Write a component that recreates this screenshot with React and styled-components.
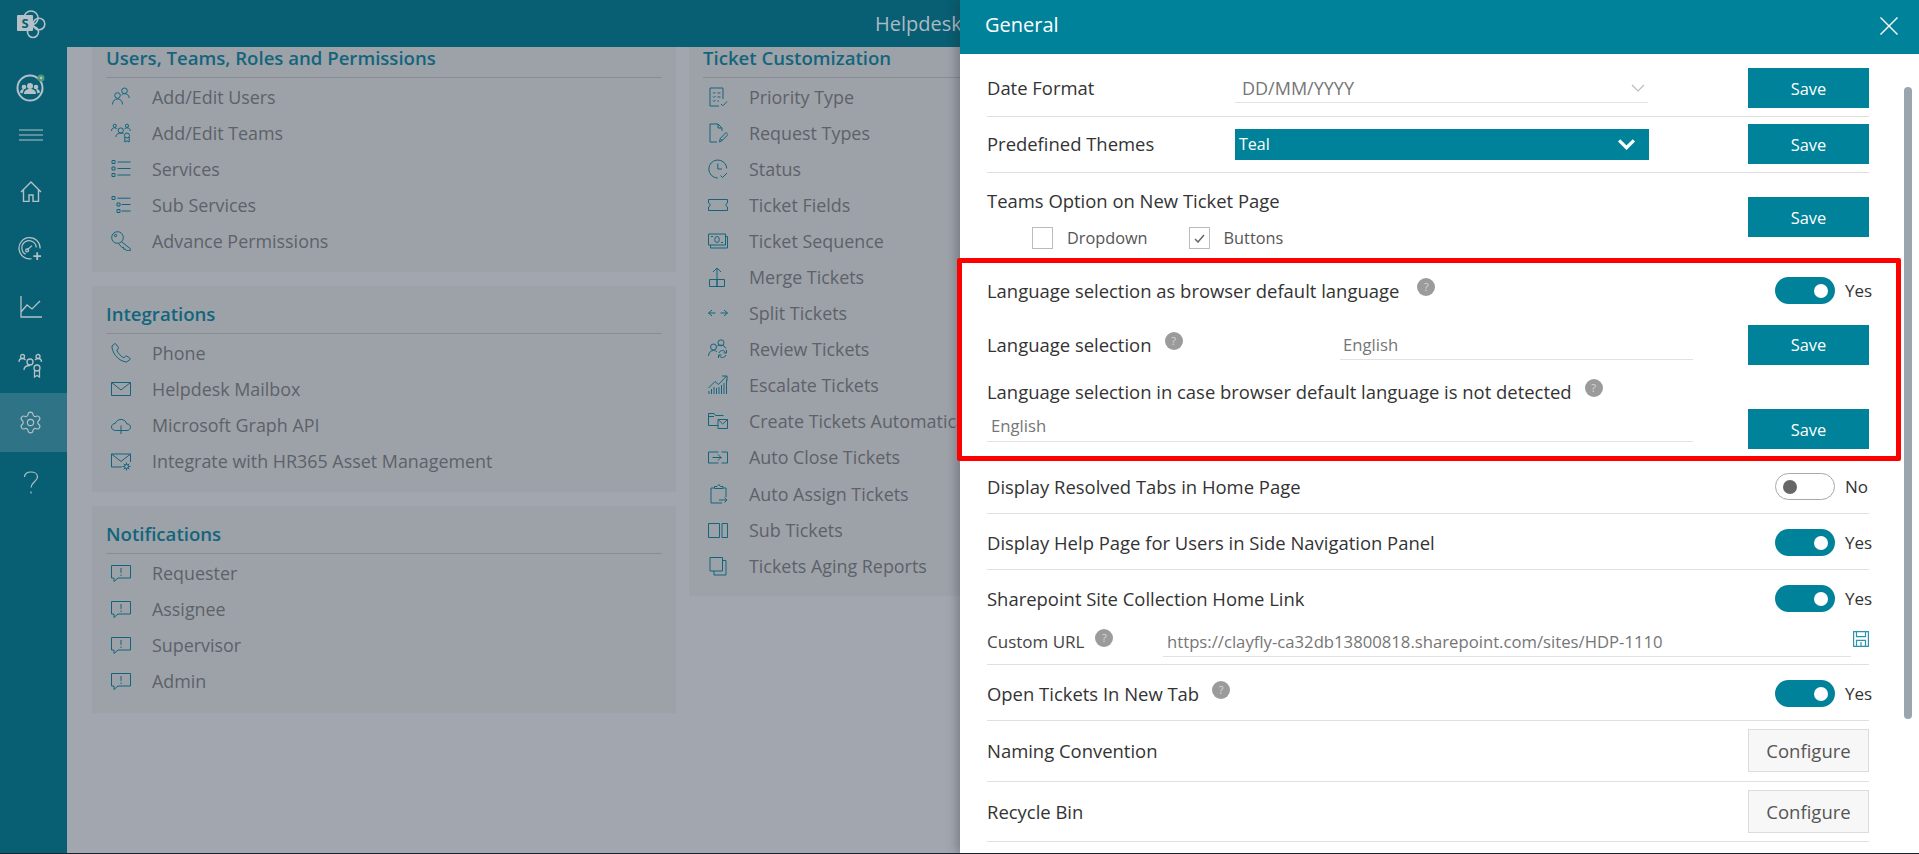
import React from 'react';
import styled, { createGlobalStyle } from 'styled-components';
import { Settings } from 'lucide-react';

const GlobalStyle = createGlobalStyle`
  html, body { margin: 0; padding: 0; }
  body {
    font-family: "Open Sans", "Noto Sans", sans-serif;
    background: #a2a7af;
  }
`;

const Page = styled.div`
  display: flex;
  position: relative;
  height: 853px;
  border-bottom: 1px solid #18222c;
  overflow: hidden;
  background: #a2a7af;
`;

/* side navigation */
const SideNav = styled.nav`
  width: 67px;
  flex: none;
  display: flex;
  flex-direction: column;
  background: #085e72;
  color: #b4c2c8;
`;

const NavItem = styled.div`
  height: ${(p) => p.$height}px;
  margin-top: ${(p) => p.$top || 0}px;
  box-sizing: border-box;
  padding-right: 6px;
  flex: none;
  display: flex;
  align-items: center;
  justify-content: center;
  background: ${(p) => (p.$active ? '#2f7486' : 'transparent')};
`;

/* dimmed page behind the panel */
const Main = styled.div`
  flex: 1;
  min-width: 0;
  display: flex;
  flex-direction: column;
`;

const TopBar = styled.header`
  height: 47px;
  flex: none;
  display: flex;
  align-items: center;
  padding-left: 808px;
  background: #085e72;
  color: #a9bbc3;
  font-size: 20px;
  position: relative;
  z-index: 1;
`;

const Columns = styled.div`
  display: flex;
  gap: 13px;
  padding-left: 25px;
  margin-top: -17px;
`;

const Column = styled.div`
  width: 584px;
  flex: none;
  display: flex;
  flex-direction: column;
  gap: 14px;
`;

const Card = styled.section`
  height: ${(p) => p.$height}px;
  padding: 16px 14px 0 14px;
  box-sizing: border-box;
  background: #9da2a9;
`;

const CardTitle = styled.h3`
  margin: 0;
  height: 31px;
  line-height: 24px;
  font-size: 18.6px;
  font-weight: 600;
  color: #13657c;
  border-bottom: 1px solid #878c95;
  white-space: nowrap;
`;

const LinkList = styled.ul`
  margin: 0;
  padding: 1px 0 0;
  list-style: none;
`;

const LinkRow = styled.li`
  height: 36.05px;
  display: flex;
  align-items: center;
  padding-left: 5px;
  gap: 21px;
  font-size: 17.9px;
  color: #5d6168;
  white-space: nowrap;
`;

const LinkIcon = styled.svg`
  width: 20px;
  height: 20px;
  flex: none;
  fill: none;
  stroke: #13657c;
  stroke-width: 1;
`;

/* settings panel */
const Panel = styled.aside`
  position: absolute;
  top: 0;
  right: 0;
  bottom: 0;
  width: 959px;
  background: #fff;
  box-shadow: -3px 0 10px rgba(40, 44, 52, 0.35);
  z-index: 2;
`;

const PanelHeader = styled.div`
  height: 54px;
  box-sizing: border-box;
  display: flex;
  align-items: center;
  justify-content: space-between;
  padding: 0 21px 6px 25px;
  background: #00839a;
  color: #fff;
  font-size: 20px;
`;

const CloseIcon = styled.svg`
  width: 18px;
  height: 18px;
  margin-top: 4px;
  stroke: #fff;
  stroke-width: 1.4;
  fill: none;
`;

const ScrollThumb = styled.div`
  position: absolute;
  left: 944px;
  top: 87px;
  width: 8px;
  height: 632px;
  border-radius: 4px;
  background: #9aa5ad;
`;

const Row = styled.div`
  height: ${(p) => p.$height}px;
  box-sizing: border-box;
  margin: 0 50px 0 27px;
  padding: ${(p) => p.$top}px 0 ${(p) => p.$bottom}px;
  display: flex;
  align-items: ${(p) => p.$align || 'center'};
  border-bottom: ${(p) => (p.$plain ? '0' : '1px solid #e0e0e0')};
`;

const Label = styled.div`
  width: ${(p) => (p.$width ? `${p.$width}px` : 'auto')};
  flex: none;
  display: flex;
  align-items: center;
  gap: ${(p) => p.$gap || 13}px;
  font-size: 18.45px;
  font-weight: 500;
  color: #333;
  line-height: 24px;
  white-space: nowrap;
`;

const SubLabel = styled(Label)`
  font-weight: 400;
  font-size: 17px;
  color: #444;
`;

const HelpDot = styled.span`
  width: 18px;
  height: 18px;
  flex: none;
  transform: translateY(-4px);
  border-radius: 50%;
  background: #9b9b9b;
  color: #d8d8d8;
  font-size: 11px;
  font-weight: 400;
  line-height: 18px;
  text-align: center;
`;

const Field = styled.div`
  width: ${(p) => (p.$width ? `${p.$width}px` : 'auto')};
  height: ${(p) => p.$height || 30}px;
  box-sizing: border-box;
  flex: ${(p) => (p.$width ? 'none' : 1)};
  display: flex;
  align-items: center;
  justify-content: space-between;
  padding: 0 3px 0 ${(p) => p.$indent || 3}px;
  border-bottom: 1px solid #e2e2e2;
  color: #767676;
  font-size: ${(p) => p.$size || 16.7}px;
  white-space: nowrap;
`;

const ThemeSelect = styled.div`
  width: 414px;
  height: 31px;
  box-sizing: border-box;
  display: flex;
  align-items: center;
  justify-content: space-between;
  padding: 0 13px 0 4px;
  background: #00839a;
  color: #fff;
  font-size: 16px;
`;

const Chevron = styled.svg`
  width: ${(p) => p.$size}px;
  height: ${(p) => p.$size}px;
  fill: none;
  stroke: ${(p) => p.$color};
  stroke-width: ${(p) => p.$weight};
`;

const SaveButton = styled.button`
  width: 121px;
  height: 40px;
  flex: none;
  margin: ${(p) => p.$top || 0}px 0 0 auto;
  padding: 0;
  border: 0;
  background: #00839a;
  color: #fff;
  font: inherit;
  font-size: 16.4px;
`;

const ConfigureButton = styled.button`
  width: 121px;
  height: 43px;
  flex: none;
  margin-left: auto;
  padding: 0;
  box-sizing: border-box;
  border: 1px solid #dcdcdc;
  background: #f7f7f7;
  color: #555;
  font: inherit;
  font-size: 18.5px;
`;

const ToggleWrap = styled.div`
  width: 94px;
  flex: none;
  margin-left: auto;
  display: flex;
  align-items: center;
  gap: 10px;
  font-size: 17px;
  color: #333;
`;

const Track = styled.span`
  width: 60px;
  height: 27px;
  flex: none;
  box-sizing: border-box;
  display: flex;
  align-items: center;
  justify-content: ${(p) => (p.$on ? 'flex-end' : 'flex-start')};
  padding: 0 7px;
  border-radius: 14px;
  background: ${(p) => (p.$on ? '#00839a' : '#fff')};
  border: ${(p) => (p.$on ? '0' : '1px solid #a8a8a8')};
`;

const Knob = styled.span`
  width: 14px;
  height: 14px;
  border-radius: 50%;
  background: ${(p) => (p.$on ? '#fff' : '#666')};
`;

const ThemeBlock = styled.div`
  display: flex;
  flex-direction: column;
  flex: 1;
`;

const CheckRow = styled.div`
  display: flex;
  align-items: center;
  gap: 14px;
  margin: 14px 0 0 45px;
  font-size: 16.3px;
  color: #555;
`;

const Box = styled.span`
  width: 21px;
  height: 22px;
  box-sizing: border-box;
  display: flex;
  align-items: center;
  justify-content: center;
  border: 1px solid #bcbcbc;
  margin-left: ${(p) => p.$gap || 0}px;
`;

const Highlighted = styled.div`
  position: relative;
  height: 203px;
`;

const RedFrame = styled.div`
  position: absolute;
  left: -3px;
  right: 18px;
  top: 0;
  bottom: 0;
  border: 5px solid #f00;
  border-radius: 2px;
`;

const LoneLabel = styled(Label)`
  margin: 15px 50px 0 27px;
`;

const SaveIcon = styled.svg`
  width: 16px;
  height: 16px;
  flex: none;
  margin: 0 0 6px 2px;
  fill: none;
  stroke: #2a94ad;
  stroke-width: 1.2;
`;

const LinkBlock = styled.div`
  margin: 0 50px 0 27px;
  height: 95px;
  box-sizing: border-box;
  padding-top: 15px;
  display: flex;
  flex-direction: column;
  border-bottom: 1px solid #e0e0e0;
`;

const LineRow = styled.div`
  display: flex;
  align-items: center;
  height: ${(p) => p.$height}px;
  margin-top: ${(p) => p.$gap || 0}px;
`;

const linkIcons = {
  users: (
    <>
      <circle cx="13.5" cy="3.8" r="2.8" />
      <circle cx="6.5" cy="8.5" r="2.8" />
      <path d="M1.5 17.5c0-3.4 2-5.5 5-5.5s5 2.1 5 5.5M10.5 8c.8-1 2-1.4 3-1.4 2.6 0 4.5 1.6 4.7 4.4" />
    </>
  ),
  teams: (
    <>
      <circle cx="3.8" cy="2.8" r="1.6" />
      <circle cx="16" cy="2.8" r="1.6" />
      <circle cx="9.8" cy="7.5" r="2.6" />
      <path d="M.5 8c0-2 1.2-3.2 3.3-3.2 1.2 0 2 .6 2.5 1.4M13.5 6.2c.5-.9 1.3-1.4 2.5-1.4 2 0 3.2 1.2 3.2 3.2M5 14c0-2.6 2-4 4.8-4 1 0 2 .2 2.8.7" />
      <circle cx="16" cy="12.5" r="2.5" />
      <path d="M13.8 14v5l2.2-1.2 2.2 1.2v-5" />
    </>
  ),
  services: (
    <path d="M1 1.5h3v3H1zM1 8h3v3H1zM1 14.5h3v3H1zM6.5 3h13M6.5 9.5h13M6.5 16h13" />
  ),
  subServices: (
    <path d="M1 1.5h3v3H1zM6 8h3v3H6zM6 14.5h3v3H6zM6.5 3.2h13M10.5 9.5h9M10.5 16h9" />
  ),
  key: (
    <>
      <circle cx="6.5" cy="6.5" r="5.8" />
      <circle cx="4.5" cy="4.5" r="1.2" />
      <path d="M10.5 10.7l8.8 7v2h-3.8l-1-1.5h-1.8v-1.8h-1.8l-3.3-3.7" />
    </>
  ),
  phone: (
    <path d="M3.2 1L1 3c-.5 5 5 15 14.5 16l3.5-2.5c.5-.5.3-1-.2-1.4l-3-2c-.5-.3-1-.2-1.4.2l-1.4 1.5c-3-1.2-6-4.5-7.3-7.8l1.5-1.2c.4-.4.5-.9.2-1.4L5 1.2C4.5.6 3.8.5 3.2 1z" />
  ),
  mail: <path d="M.5 3.5h19v13H.5zM.5 3.5L10 11l9.5-7.5" />,
  cloud: (
    <path d="M6 15.5H4.5C2.3 15.5.5 14 .5 12c0-2 1.7-3.5 3.7-3.5C5 6 7.3 4.5 10 4.5c3 0 5.3 2 5.7 4.3 2.2 0 3.8 1.5 3.8 3.4 0 1.9-1.6 3.3-3.5 3.3H14M10 10.5v8.5M6 15.5h8" />
  ),
  mailGear: (
    <>
      <path d="M11 16H.5V3h19v8M.5 3L10 10.5 19.5 3" />
      <circle cx="15.5" cy="15.5" r="2" />
      <path d="M15.5 11.5v2M15.5 17.5v2M11.5 15.5h2M17.5 15.5h2M12.7 12.7l1.4 1.4M16.9 16.9l1.4 1.4M12.7 18.3l1.4-1.4M16.9 14.1l1.4-1.4" />
    </>
  ),
  alert: <path d="M.5 2.5h19V15H7l-4 3.5V15H.5zM10 5v5M10 11.5V13" />,
  priority: (
    <path d="M2 1h13v11M2 1v18h9M5 5.5l1 1L7.5 5M9.5 6h3M5 9.500l1 1L7.5 9M9.5 10h3M5 13.5l1 1L7.5 13M9.5 14H11M13 17l1.8 1.800L19 14.5" />
  ),
  request: (
    <path d="M14 8V5l-4-4H2v18h7M10 1v4h4M11.5 19l.8-3.500L18 9.500l2 2-5.700 6zM12.300 15.500l2 2" />
  ),
  status: <path d="M18.800 9.500A9 9 0 1 0 9.800 19M9.800 4.500V10H14M12.500 16.500l2 2 4.500-4.500" />,
  ticket: (
    <path d="M.5 4.5h19V8c-1 0-1.500.9-1.500 2s.5 2 1.500 2v3.500H.5V12c1 0 1.500-.9 1.500-2s-.5-2-1.500-2z" />
  ),
  sequence: (
    <>
      <path d="M.5 3h17v11H.5zM2.500 14v3h17V5.500h-2M3 5.500h2M13 11.500h2" />
      <ellipse cx="9" cy="8.500" rx="2.300" ry="3" />
    </>
  ),
  merge: <path d="M1.500 12.500H9v7H1.500zM9 12.500h7.500v7H9zM9 12.500V1M5 5l4-4 4 4" />,
  split: <path d="M.5 10h7M4 7l-3.500 3L4 13M12.500 10h7M16 7l3.500 3-3.500 3" />,
  review: (
    <>
      <circle cx="13" cy="3.800" r="3" />
      <circle cx="5.500" cy="8" r="3" />
      <path d="M.5 17c0-3 2-5.500 5-5.500 1.500 0 2.500.5 3.500 1.500M9.500 6.800c1-.7 2.200-.6 3.500-.6 2.200 0 4 1.200 4.800 3.300M11 14c.5-1.500 1.700-2.500 3.300-2.500 1.500 0 2.600.7 3.200 2M18.500 11v3h-3M18 16c-.5 1.500-1.800 2.500-3.500 2.500-1.500 0-2.700-.8-3.300-2M10.500 19v-3h3" />
    </>
  ),
  escalate: (
    <path d="M1 19v-3M3.500 19v-5M6 19v-7M8.500 19v-6M11 19v-7M13.500 19v-9M16 19V8M18.500 19V5M.5 13L7 6.500l3.500 3 8-8.500M14 1h5v5" />
  ),
  createAuto: (
    <path d="M10 14.500H.5v-12H6l1.500 2h8M.5 5.500H6M10 8.500h9.500v9H10zM10 8.500l4.700 4.500 4.800-4.500" />
  ),
  autoClose: <path d="M10.500 16H.5V5h10M13.500 5h6v11h-6M4.500 10.500h9M10 7.500l3 3-3 3" />,
  autoAssign: (
    <path d="M18 13V4h-3V2.500h-2.500L11 .5l-2 2H6.500V4H3v15h11M6.500 4.500H15M11 16h8M16.500 13.500L19 16l-2.500 2.500" />
  ),
  subTickets: <path d="M.5 3.500h11v14H.5zM14 3.500h5.500v14H14z" />,
  aging: <path d="M2 1.500h12.500V15H2zM14.500 4.500H18V19H6v-4" />,
};

function LinkGroup({ title, height, items }) {
  return (
    <Card $height={height}>
      <CardTitle>{title}</CardTitle>
      <LinkList>
        {items.map(([icon, text]) => (
          <LinkRow key={text}>
            <LinkIcon viewBox="0 0 20 20">{linkIcons[icon]}</LinkIcon>
            {text}
          </LinkRow>
        ))}
      </LinkList>
    </Card>
  );
}

function Toggle({ on = true }) {
  return (
    <ToggleWrap>
      <Track $on={on}>
        <Knob $on={on} />
      </Track>
      {on ? 'Yes' : 'No'}
    </ToggleWrap>
  );
}

function NavIcons() {
  return (
    <>
      <NavItem $height={47}>
        <svg width="30" height="30" viewBox="0 0 30 30" fill="none" stroke="currentColor" strokeWidth="1.6">
          <circle cx="15" cy="9" r="7" />
          <circle cx="23" cy="15" r="5.8" />
          <circle cx="17" cy="23" r="5.5" />
          <rect x="1" y="6" width="16" height="16" rx="1" fill="currentColor" stroke="none" />
          <text x="9" y="19" fontFamily="Open Sans" fontSize="13" fontWeight="700" fill="#085e72" stroke="none" textAnchor="middle">S</text>
        </svg>
      </NavItem>
      <NavItem $height={32} $top={24}>
        <svg width="32" height="32" viewBox="0 0 32 32" fill="none">
          <circle cx="15" cy="17" r="12.5" stroke="currentColor" strokeWidth="2" />
          <circle cx="15" cy="15" r="3" fill="currentColor" />
          <circle cx="9" cy="16" r="2.3" fill="currentColor" />
          <circle cx="21" cy="16" r="2.3" fill="currentColor" />
          <path d="M9 23c0-3.500 2.500-5 6-5s6 1.500 6 5zM5 21.500c0-2 1.500-3.500 4-3.500l-1.500 4.500zM25 21.500c0-2-1.500-3.500-4-3.500l1.500 4.500z" fill="currentColor" />
          <circle cx="26" cy="7" r="3.5" fill="#4c9a7a" />
          <circle cx="26" cy="7" r="1.3" fill="#b4c2c8" />
        </svg>
      </NavItem>
      <NavItem $height={20} $top={22}>
        <svg width="24" height="12" viewBox="0 0 24 12" stroke="currentColor" strokeWidth="1">
          <path d="M0 1h24M0 6h24M0 11h24" />
        </svg>
      </NavItem>
      <NavItem $height={20} $top={36}>
        <svg width="22" height="21" viewBox="0 0 22 21" fill="none" stroke="currentColor" strokeWidth="1.4">
          <path d="M1 11L11 1l10 10M3.500 9v11.500H9V14h4v6.500h5.500V9" />
        </svg>
      </NavItem>
      <NavItem $height={24} $top={35}>
        <svg width="25" height="25" viewBox="0 0 26 26" fill="none" stroke="currentColor" strokeWidth="1.3">
          <path d="M14 23.500A11 11 0 1 1 23 13" />
          <path d="M8 19a7.500 7.500 0 1 1 11-7" />
          <path d="M9.500 14.500l5-4.500" />
          <circle cx="9.5" cy="15" r="1.5" />
          <path d="M20 17v8M16 21h8" strokeWidth="1.8" />
        </svg>
      </NavItem>
      <NavItem $height={22} $top={36}>
        <svg width="22" height="22" viewBox="0 0 22 22" fill="none" stroke="currentColor" strokeWidth="1.3">
          <path d="M1 0v21h21M1 16l6-7 5 4 8-8" />
        </svg>
      </NavItem>
      <NavItem $height={24} $top={35}>
        <svg width="25" height="25" viewBox="0 0 25 25" fill="none" stroke="currentColor" strokeWidth="1.3">
          <circle cx="4.5" cy="3.5" r="2" />
          <circle cx="20" cy="3.5" r="2" />
          <circle cx="12" cy="9" r="3" />
          <path d="M1 9c0-2 1.200-3.500 3.500-3.500 1.400 0 2.300.6 3 1.500M17 7c.7-.9 1.600-1.500 3-1.500 2.300 0 3.500 1.500 3.500 3.500M6 17c0-3 2.500-4.500 6-4.500" />
          <circle cx="19" cy="15" r="3" />
          <path d="M16.500 17v7l2.500-1.500 2.500 1.500v-7" />
        </svg>
      </NavItem>
      <NavItem $height={59} $top={16} $active>
        <Settings size={25} strokeWidth={1.1} />
      </NavItem>
      <NavItem $height={24} $top={19}>
        <svg width="16" height="24" viewBox="0 0 16 24" fill="none" stroke="currentColor" strokeWidth="1.2">
          <path d="M1.500 6c0-3 2.500-5 6.500-5 3.800 0 6.500 2 6.500 5 0 4.500-6.500 5-6.500 10.500M8 20.500v2" />
        </svg>
      </NavItem>
    </>
  );
}

export default function App() {
  return (
    <Page>
      <GlobalStyle />
      <SideNav>
        <NavIcons />
      </SideNav>
      <Main>
        <TopBar>Helpdesk</TopBar>
        <Columns>
          <Column>
            <LinkGroup
              title="Users, Teams, Roles and Permissions"
              height={242}
              items={[
                ['users', 'Add/Edit Users'],
                ['teams', 'Add/Edit Teams'],
                ['services', 'Services'],
                ['subServices', 'Sub Services'],
                ['key', 'Advance Permissions'],
              ]}
            />
            <LinkGroup
              title="Integrations"
              height={206}
              items={[
                ['phone', 'Phone'],
                ['mail', 'Helpdesk Mailbox'],
                ['cloud', 'Microsoft Graph API'],
                ['mailGear', 'Integrate with HR365 Asset Management'],
              ]}
            />
            <LinkGroup
              title="Notifications"
              height={207}
              items={[
                ['alert', 'Requester'],
                ['alert', 'Assignee'],
                ['alert', 'Supervisor'],
                ['alert', 'Admin'],
              ]}
            />
          </Column>
          <Column>
            <LinkGroup
              title="Ticket Customization"
              height={566}
              items={[
                ['priority', 'Priority Type'],
                ['request', 'Request Types'],
                ['status', 'Status'],
                ['ticket', 'Ticket Fields'],
                ['sequence', 'Ticket Sequence'],
                ['merge', 'Merge Tickets'],
                ['split', 'Split Tickets'],
                ['review', 'Review Tickets'],
                ['escalate', 'Escalate Tickets'],
                ['createAuto', 'Create Tickets Automatically'],
                ['autoClose', 'Auto Close Tickets'],
                ['autoAssign', 'Auto Assign Tickets'],
                ['subTickets', 'Sub Tickets'],
                ['aging', 'Tickets Aging Reports'],
              ]}
            />
          </Column>
        </Columns>
      </Main>

      <Panel>
        <PanelHeader>
          General
          <CloseIcon viewBox="0 0 18 18">
            <path d="M0.5 0.5l17 17M17.5 0.5l-17 17" />
          </CloseIcon>
        </PanelHeader>
        <ScrollThumb />

        <Row $height={63} $top={14} $bottom={8}>
          <Label $width={248}>Date Format</Label>
          <Field $width={413} $indent={7} $size={18}>
            DD/MM/YYYY
            <Chevron viewBox="0 0 14 8" $size={14} $color="#b8bcc2" $weight={1.2}>
              <path d="M1 1l6 6 6-6" />
            </Chevron>
          </Field>
          <SaveButton>Save</SaveButton>
        </Row>
        <Row $height={56} $top={7} $bottom={8}>
          <Label $width={248}>Predefined Themes</Label>
          <ThemeSelect>
            Teal
            <Chevron viewBox="0 0 18 12" $size={19} $color="#fff" $weight={3}>
              <path d="M2 2l7 7 7-7" />
            </Chevron>
          </ThemeSelect>
          <SaveButton>Save</SaveButton>
        </Row>
        <Row $height={85} $top={16} $bottom={0} $align="flex-start" $plain>
          <ThemeBlock>
            <Label>Teams Option on New Ticket Page</Label>
            <CheckRow>
              <Box />
              Dropdown
              <Box $gap={27}>
                <svg width="11" height="9" viewBox="0 0 11 9" fill="none" stroke="#666" strokeWidth="1.5">
                  <path d="M1 5l3 3 6-7" />
                </svg>
              </Box>
              Buttons
            </CheckRow>
          </ThemeBlock>
          <SaveButton $top={8}>Save</SaveButton>
        </Row>

        <Highlighted>
          <Row $height={66} $top={19} $bottom={20} $plain>
            <Label $gap={18}>
              Language selection as browser default language
              <HelpDot>?</HelpDot>
            </Label>
            <Toggle />
          </Row>
          <Row $height={41} $top={0} $bottom={0} $plain>
            <Label $width={353}>
              Language selection
              <HelpDot>?</HelpDot>
            </Label>
            <Field $width={353}>English</Field>
            <SaveButton>Save</SaveButton>
          </Row>
          <LoneLabel>
            Language selection in case browser default language is not detected
            <HelpDot>?</HelpDot>
          </LoneLabel>
          <Row $height={46} $top={5} $bottom={0} $align="flex-start" $plain>
            <Field $width={706} $height={33} $indent={4}>
              English
            </Field>
            <SaveButton>Save</SaveButton>
          </Row>
          <RedFrame />
        </Highlighted>

        <Row $height={53} $top={12} $bottom={13}>
          <Label>Display Resolved Tabs in Home Page</Label>
          <Toggle on={false} />
        </Row>
        <Row $height={56} $top={15} $bottom={13}>
          <Label>Display Help Page for Users in Side Navigation Panel</Label>
          <Toggle />
        </Row>
        <LinkBlock>
          <LineRow $height={27}>
            <Label>Sharepoint Site Collection Home Link</Label>
            <Toggle />
          </LineRow>
          <LineRow $height={30} $gap={15}>
            <SubLabel $width={176} $gap={11}>
              Custom URL
              <HelpDot>?</HelpDot>
            </SubLabel>
            <Field $indent={4}>https://clayfly-ca32db13800818.sharepoint.com/sites/HDP-1110</Field>
            <SaveIcon viewBox="0 0 16 16">
              <path d="M.6.6h14.800v14.800H.6zM3.500.6v5h9v-5M3.500 15.400v-6h9v6M8 11v4.400" />
            </SaveIcon>
          </LineRow>
        </LinkBlock>
        <Row $height={56} $top={15} $bottom={13}>
          <Label>
            Open Tickets In New Tab
            <HelpDot>?</HelpDot>
          </Label>
          <Toggle />
        </Row>
        <Row $height={61} $top={8} $bottom={9}>
          <Label>Naming Convention</Label>
          <ConfigureButton>Configure</ConfigureButton>
        </Row>
        <Row $height={60} $top={8} $bottom={8}>
          <Label>Recycle Bin</Label>
          <ConfigureButton>Configure</ConfigureButton>
        </Row>
      </Panel>
    </Page>
  );
}
